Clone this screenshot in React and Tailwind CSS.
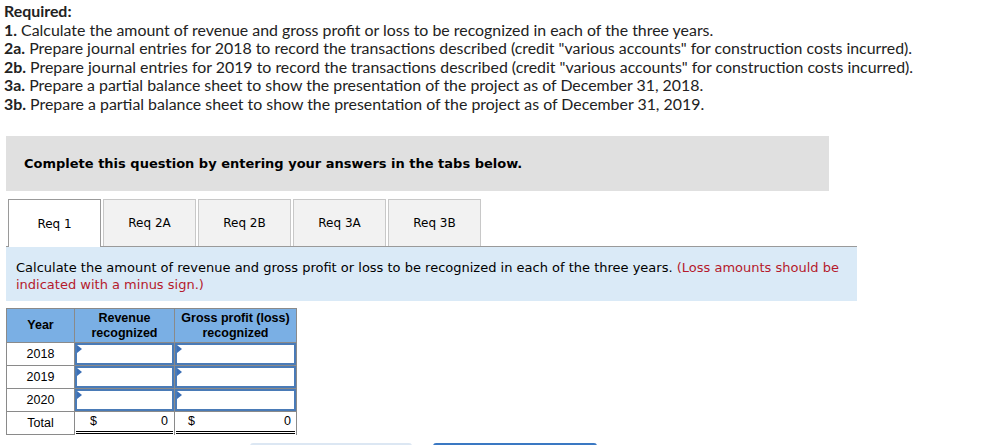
import React from 'react';

const reqs = [
  { num: '1.', text: 'Calculate the amount of revenue and gross profit or loss to be recognized in each of the three years.' },
  { num: '2a.', text: 'Prepare journal entries for 2018 to record the transactions described (credit "various accounts" for construction costs incurred).' },
  { num: '2b.', text: 'Prepare journal entries for 2019 to record the transactions described (credit "various accounts" for construction costs incurred).' },
  { num: '3a.', text: 'Prepare a partial balance sheet to show the presentation of the project as of December 31, 2018.' },
  { num: '3b.', text: 'Prepare a partial balance sheet to show the presentation of the project as of December 31, 2019.' },
];

const tabs = ['Req 1', 'Req 2A', 'Req 2B', 'Req 3A', 'Req 3B'];

function InputCell() {
  return (
    <td className="p-0 border border-[#8a8a8a]">
      <div className="relative h-[22px] border-2 border-[#4a7bb7] bg-white">
        <span className="absolute left-0 top-0 w-0 h-0 border-t-[4px] border-b-[4px] border-l-[5px] border-t-transparent border-b-transparent border-l-[#3b6fb6]" />
      </div>
    </td>
  );
}

export default function App() {
  return (
    <div className="w-[983px] h-[445px] overflow-hidden bg-white">
      <div className="pl-[4px] pt-[2px] text-[15.9px] leading-[18.5px] text-[#222] font-['Lato','Open_Sans',sans-serif]">
        <div className="font-bold">Required:</div>
        {reqs.map((r) => (
          <div key={r.num}>
            <span className="font-bold">{r.num}</span> {r.text}
          </div>
        ))}
      </div>

      <div className="ml-[6px] mt-[23px] w-[823px] h-[55px] bg-[#e0e0e0] flex items-center pl-[18px] font-['DejaVu_Sans','Verdana',sans-serif] text-[13px] font-bold text-black">
        Complete this question by entering your answers in the tabs below.
      </div>

      <div className="ml-[6px] mt-[8px] w-[851px] flex items-end gap-[2px] border-b border-[#9a9a9a] font-['DejaVu_Sans','Verdana',sans-serif] text-[12px] text-black">
        {tabs.map((t, i) => (
          <div
            key={t}
            className={
              i === 0
                ? 'ml-[2px] w-[93px] h-[48px] -mb-px bg-white border border-b-0 border-[#9a9a9a] flex items-center justify-center'
                : 'w-[93px] h-[47px] bg-[#f2f2f2] border border-b-0 border-[#c8c8c8] flex items-center justify-center'
            }
          >
            {t}
          </div>
        ))}
      </div>

      <div className="ml-[6px] w-[851px] h-[54px] bg-[#daeaf7] pl-[10px] pt-[12px] font-['DejaVu_Sans','Verdana',sans-serif] text-[13px] leading-[17px] text-black">
        Calculate the amount of revenue and gross profit or loss to be recognized in each of the three years.{' '}
        <span className="text-[#b51a2c]">(Loss amounts should be indicated with a minus sign.)</span>
      </div>

      <table className="ml-[6px] mt-[7px] border-collapse font-['Liberation_Sans','Arial',sans-serif] text-[12.5px] text-black">
        <thead>
          <tr className="h-[34px] bg-[#7aafe4] font-bold leading-[15px]">
            <th className="w-[68px] border border-[#8a8a8a]">Year</th>
            <th className="w-[100px] border border-[#8a8a8a]">Revenue<br />recognized</th>
            <th className="w-[122px] border border-[#8a8a8a]">Gross profit (loss)<br />recognized</th>
          </tr>
        </thead>
        <tbody>
          {['2018', '2019', '2020'].map((y) => (
            <tr key={y} className="h-[23px]">
              <td className="border border-[#8a8a8a] text-center">{y}</td>
              <InputCell />
              <InputCell />
            </tr>
          ))}
          <tr className="h-[23px]">
            <td className="border border-[#8a8a8a] text-center">Total</td>
            <td className="border-l border-r border-t border-[#8a8a8a] p-0">
              <div className="flex justify-between px-[14px] pr-[5px] h-[21px] items-center border-b-[3px] border-double border-black mx-[1px]">
                <span>$</span>
                <span>0</span>
              </div>
            </td>
            <td className="border-l border-r border-t border-[#8a8a8a] p-0">
              <div className="flex justify-between pl-[12px] pr-[4px] h-[21px] items-center border-b-[3px] border-double border-black mx-[1px]">
                <span>$</span>
                <span>0</span>
              </div>
            </td>
          </tr>
        </tbody>
      </table>

      <div className="flex mt-[8px] ml-[250px] gap-[21px]">
        <div className="w-[162px] h-[10px] rounded-t-[3px] bg-[#dce7f3]" />
        <div className="w-[164px] h-[10px] rounded-t-[3px] bg-[#3a78c3]" />
      </div>
    </div>
  );
}
